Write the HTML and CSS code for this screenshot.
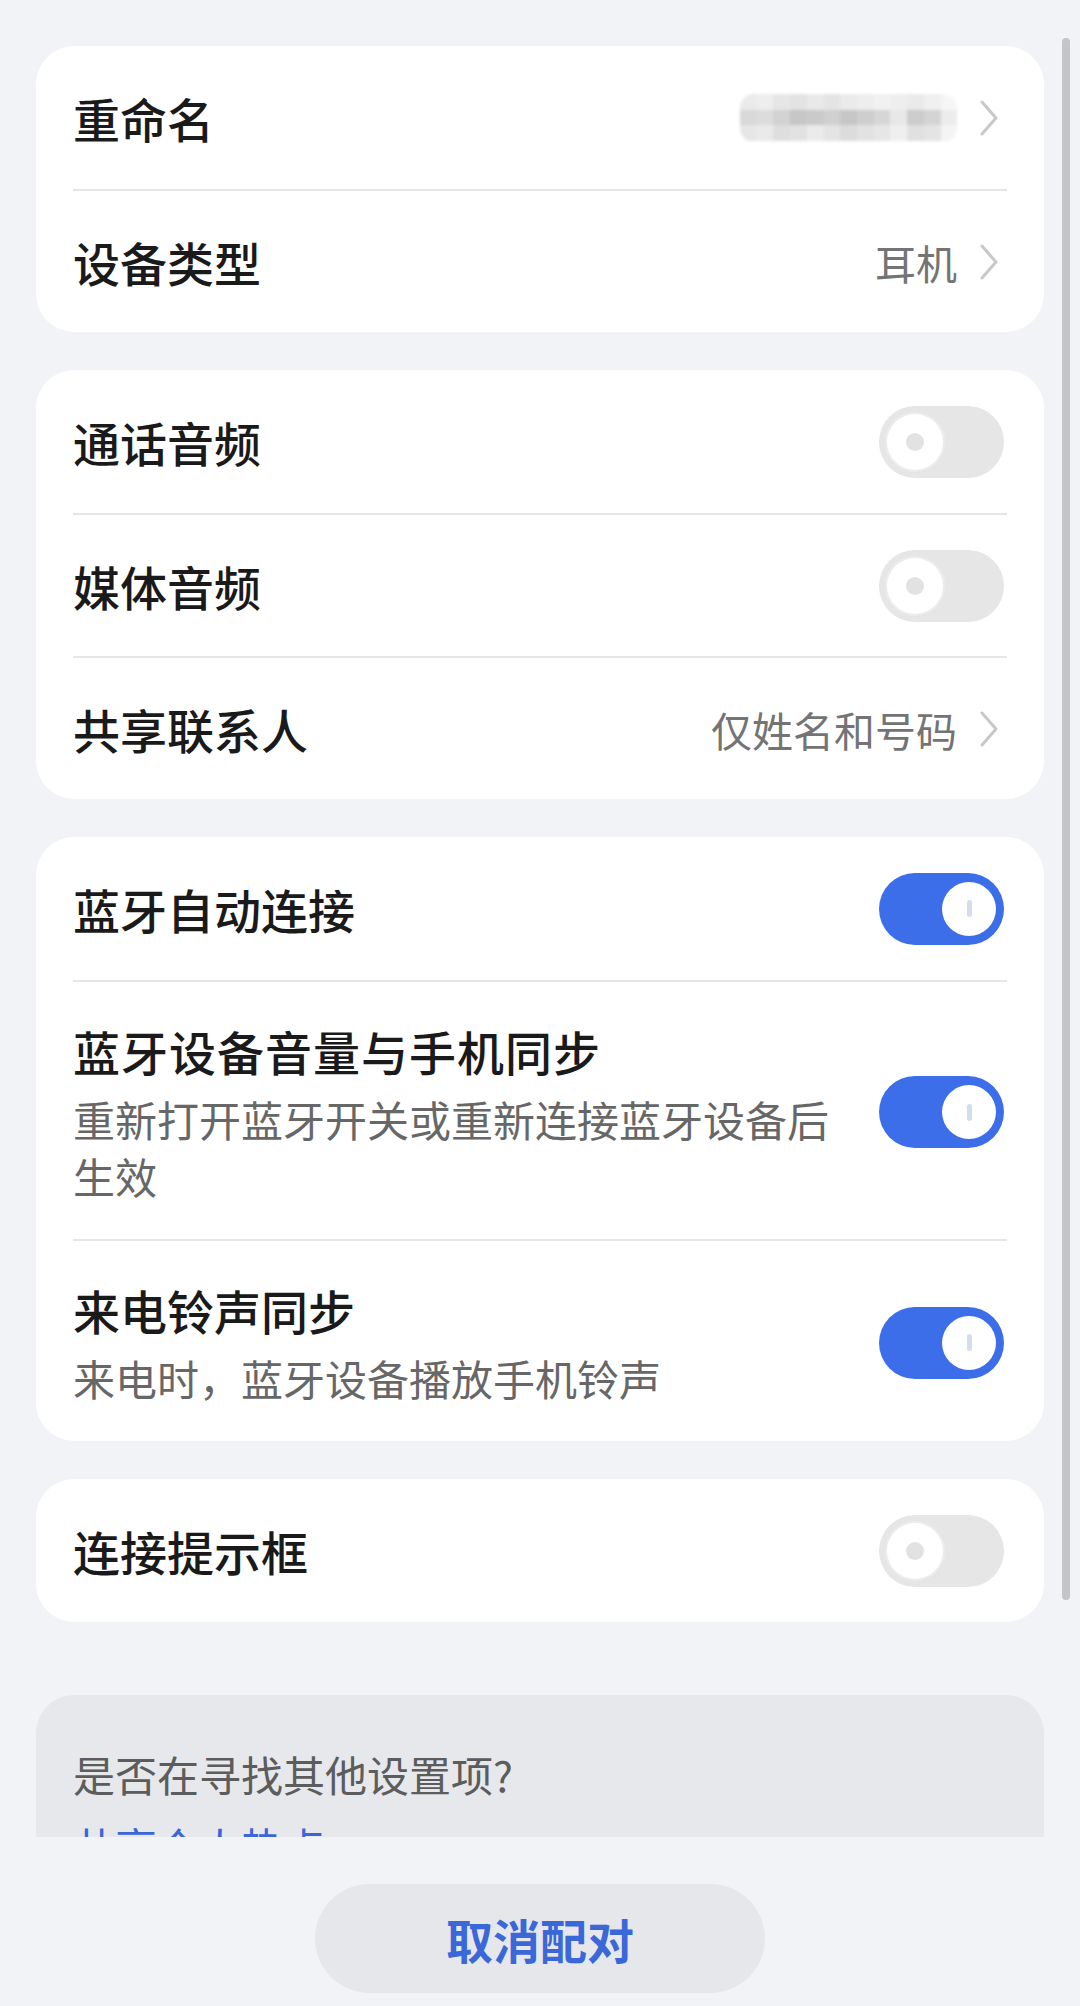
FILE: index.html
```html
<!DOCTYPE html>
<html lang="zh-CN">
<head>
<meta charset="utf-8">
<title>蓝牙设备设置</title>
<link rel="stylesheet" href="styles.css">
</head>
<body>
<div class="screen">
  <div class="scroll">
    <div class="card">
      <div class="row">
        <span class="title">重命名</span>
        <span class="value"><span class="mosaic"></span><span class="chev"><svg viewBox="0 0 20 38" width="20" height="38"><path d="M3 3 L17 19 L3 35" fill="none" stroke="#c8c8c8" stroke-width="3" stroke-linecap="round" stroke-linejoin="round"/></svg></span></span>
      </div>
      <div class="row">
        <span class="title">设备类型</span>
        <span class="value"><span class="vtext">耳机</span><span class="chev"><svg viewBox="0 0 20 38" width="20" height="38"><path d="M3 3 L17 19 L3 35" fill="none" stroke="#c8c8c8" stroke-width="3" stroke-linecap="round" stroke-linejoin="round"/></svg></span></span>
      </div>
    </div>

    <div class="card">
      <div class="row">
        <span class="title">通话音频</span>
        <span class="switch off"><span class="knob"></span></span>
      </div>
      <div class="row">
        <span class="title">媒体音频</span>
        <span class="switch off"><span class="knob"></span></span>
      </div>
      <div class="row">
        <span class="title">共享联系人</span>
        <span class="value"><span class="vtext">仅姓名和号码</span><span class="chev"><svg viewBox="0 0 20 38" width="20" height="38"><path d="M3 3 L17 19 L3 35" fill="none" stroke="#c8c8c8" stroke-width="3" stroke-linecap="round" stroke-linejoin="round"/></svg></span></span>
      </div>
    </div>

    <div class="card">
      <div class="row">
        <span class="title">蓝牙自动连接</span>
        <span class="switch on"><span class="knob"></span></span>
      </div>
      <div class="row tall">
        <div class="text">
          <div class="title wide">蓝牙设备音量与手机同步</div>
          <div class="sub">重新打开蓝牙开关或重新连接蓝牙设备后生效</div>
        </div>
        <span class="switch on"><span class="knob"></span></span>
      </div>
      <div class="row tall">
        <div class="text">
          <div class="title">来电铃声同步</div>
          <div class="sub">来电时，蓝牙设备播放手机铃声</div>
        </div>
        <span class="switch on"><span class="knob"></span></span>
      </div>
    </div>

    <div class="card">
      <div class="row">
        <span class="title">连接提示框</span>
        <span class="switch off"><span class="knob"></span></span>
      </div>
    </div>

    <div class="more">
      <div class="more-q">是否在寻找其他设置项?</div>
      <div class="more-link">共享个人热点</div>
    </div>

    <div class="scrollbar"></div>
  </div>

  <div class="bottom">
    <button class="unpair">取消配对</button>
  </div>
</div>
</body>
</html>
```

FILE: styles.css
```css
* { box-sizing: border-box; }

html, body {
  margin: 0;
  padding: 0;
  background: #f1f3f6;
}

body {
  font-family: "Noto Sans CJK SC", "Noto Sans", sans-serif;
  color: #1a1a1a;
}

.screen {
  width: 1080px;
  height: 2006px;
  overflow: hidden;
  display: flex;
  flex-direction: column;
}

.scroll {
  position: relative;
  height: 1837px;
  flex: none;
  overflow: hidden;
  padding: 46px 36px 0 36px;
  display: flex;
  flex-direction: column;
  gap: 38px;
}

.card {
  background: #ffffff;
  border-radius: 38px;
  padding: 0 37px;
  flex: none;
}

.row {
  display: flex;
  align-items: center;
  justify-content: space-between;
  min-height: 143px;
}

.row + .row {
  border-top: 2px solid #e6e6e8;
}

.row.tall {
  align-items: center;
  padding: 38px 0 35px 0;
}

.row.tall:last-child {
  min-height: 200px;
}

.title {
  font-size: 47px;
  font-weight: 500;
  line-height: 62px;
  color: #1a1a1a;
  white-space: nowrap;
}

.title.wide {
  letter-spacing: 1px;
}

.text {
  flex: 1;
  min-width: 0;
  margin-right: 30px;
}

.sub {
  font-size: 42px;
  line-height: 57px;
  color: #676767;
  margin-top: 8px;
}

.value {
  display: flex;
  align-items: center;
  gap: 22px;
  margin-right: 8px;
}

.vtext {
  font-size: 41px;
  line-height: 56px;
  color: #747474;
}

.chev {
  display: flex;
  width: 20px;
  height: 38px;
}

.mosaic {
  display: block;
  width: 217px;
  height: 48px;
  border-radius: 14px;
  filter: blur(1.4px);
  background:
    linear-gradient(to right,
      #eaeaea 0 7.7%, #eeeeee 7.7% 15.4%, #e6e6e6 15.4% 23.1%, #e3e3e3 23.1% 30.8%,
      #e9e9e9 30.8% 38.5%, #e4e4e4 38.5% 46.2%, #ebebeb 46.2% 53.9%, #eeeeee 53.9% 61.6%,
      #f1f1f1 61.6% 69.3%, #eeeeee 69.3% 77%, #eaeaea 77% 84.7%, #f0f0f0 84.7% 92.4%, #f6f6f6 92.4% 100%)
      0 0 / 100% 34% no-repeat,
    linear-gradient(to right,
      #d8d8d8 0 7.7%, #dcdcdc 7.7% 15.4%, #d2d2d2 15.4% 23.1%, #c6c6c6 23.1% 30.8%,
      #cacaca 30.8% 38.5%, #d0d0d0 38.5% 46.2%, #c6c6c6 46.2% 53.9%, #cecece 53.9% 61.6%,
      #d6d6d6 61.6% 69.3%, #e8e8e8 69.3% 77%, #cccccc 77% 84.7%, #d4d4d4 84.7% 92.4%, #ececec 92.4% 100%)
      0 50% / 100% 34% no-repeat,
    linear-gradient(to right,
      #e6e6e6 0 7.7%, #eaeaea 7.7% 15.4%, #dedede 15.4% 23.1%, #e2e2e2 23.1% 30.8%,
      #ebebeb 30.8% 38.5%, #e4e4e4 38.5% 46.2%, #dcdcdc 46.2% 53.9%, #e2e2e2 53.9% 61.6%,
      #e6e6e6 61.6% 69.3%, #efefef 69.3% 77%, #e0e0e0 77% 84.7%, #e4e4e4 84.7% 92.4%, #f4f4f4 92.4% 100%)
      0 100% / 100% 34% no-repeat;
}

/* switches */
.switch {
  flex: none;
  width: 125px;
  height: 72px;
  border-radius: 36px;
  display: flex;
  align-items: center;
  padding: 0 8px;
  margin-right: 3px;
}

.switch.off {
  background: #e6e6e6;
  justify-content: flex-start;
}

.switch.on {
  background: #3b6ee8;
  justify-content: flex-end;
}

.knob {
  width: 56px;
  height: 56px;
  border-radius: 50%;
  background: #ffffff;
  display: flex;
  align-items: center;
  justify-content: center;
}

.switch.off .knob {
  box-shadow: 0 0 0 2px #ececec, 0 1px 3px rgba(0, 0, 0, 0.06);
}

.switch.off .knob::after {
  content: "";
  width: 18px;
  height: 18px;
  border-radius: 50%;
  background: #e2e2e2;
}

.switch.on .knob {
  width: 54px;
  height: 54px;
}

.switch.on .knob::after {
  content: "";
  width: 5px;
  height: 17px;
  border-radius: 3px;
  background: #d5dcee;
}

/* more settings */
.more {
  flex: none;
  margin-top: 35px;
  background: #e7e8eb;
  border-radius: 38px 38px 0 0;
  padding: 50px 37px 40px 37px;
  height: 300px;
}

.more-q {
  font-size: 42px;
  line-height: 57px;
  color: #5c5c5c;
}

.more-link {
  font-size: 42px;
  line-height: 57px;
  color: #3a66d6;
  margin-top: 15px;
}

.scrollbar {
  position: absolute;
  left: 1062px;
  top: 38px;
  width: 8px;
  height: 1562px;
  border-radius: 4px;
  background: #c4c5c8;
}

/* bottom bar */
.bottom {
  flex: 1;
  background: #f1f3f6;
  display: flex;
  justify-content: center;
  align-items: flex-start;
  padding-top: 47px;
}

.unpair {
  width: 450px;
  height: 109px;
  border: none;
  border-radius: 55px;
  background: #e6e7ea;
  color: #3a68d8;
  font-family: "Noto Sans CJK SC", "Noto Sans", sans-serif;
  font-size: 47px;
  font-weight: 700;
  padding: 0;
  margin: 0;
}
```
